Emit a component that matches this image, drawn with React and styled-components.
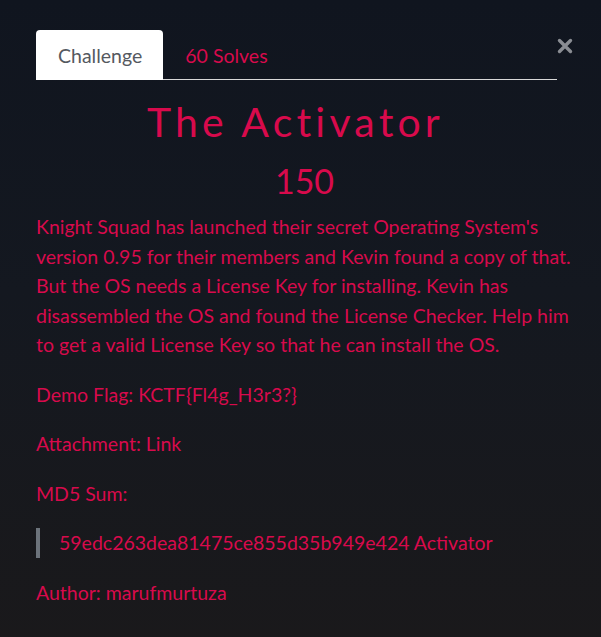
import styled, { createGlobalStyle } from 'styled-components';

const GlobalStyle = createGlobalStyle`
  html, body {
    margin: 0;
    padding: 0;
  }

  body {
    min-height: 637px;
    background: linear-gradient(180deg, #10151f 0%, #141820 45%, #1a191b 100%);
    font-family: Lato, "Open Sans", sans-serif;
  }
`;

const RED = '#d80a4c';

function App() {
  return (
    <>
      <GlobalStyle />
      <Modal>
        <TopRow>
          <Tabs>
            <Tab active>Challenge</Tab>
            <Tab>60 Solves</Tab>
          </Tabs>
          <CloseButton aria-label="close">
            <svg width="16" height="16" viewBox="0 0 16 16">
              <path d="M2.5 2.5 L13.5 13.5 M13.5 2.5 L2.5 13.5" stroke="#8a8d93" strokeWidth="3.4" strokeLinecap="round" />
            </svg>
          </CloseButton>
        </TopRow>

        <Title>The Activator</Title>
        <Points>150</Points>

        <Body>
          <Text>
            Knight Squad has launched their secret Operating System&apos;s version 0.95 for their
            members and Kevin found a copy of that. But the OS needs a License Key for installing.
            Kevin has disassembled the OS and found the License Checker. Help him to get a valid
            License Key so that he can install the OS.
          </Text>
          <Text>Demo Flag: KCTF{'{'}Fl4g_H3r3?{'}'}</Text>
          <Text>
            Attachment: <Link href="#link">Link</Link>
          </Text>
          <Text>MD5 Sum:</Text>
          <Quote>59edc263dea81475ce855d35b949e424 Activator</Quote>
          <Text>Author: marufmurtuza</Text>
        </Body>
      </Modal>
    </>
  );
}

const Modal = styled.div`
  padding: 30px 28px 20px 36px;
  display: flex;
  flex-direction: column;
  color: ${RED};
`;

const TopRow = styled.div`
  display: flex;
  align-items: flex-start;
`;

const Tabs = styled.nav`
  flex: 1;
  display: flex;
  border-bottom: 1px solid #d9d9d9;
`;

const Tab = styled.div`
  height: 50px;
  padding: 0 21px 0 22px;
  display: flex;
  align-items: center;
  font-size: 19.5px;
  border-radius: 4px 4px 0 0;
  margin-bottom: -1px;
  background: ${({ active }) => (active ? '#ffffff' : 'transparent')};
  color: ${({ active }) => (active ? '#55595f' : RED)};
`;

const CloseButton = styled.button`
  width: 16px;
  height: 16px;
  margin-top: 8px;
  padding: 0;
  border: none;
  background: none;
  display: flex;
`;

const Title = styled.h1`
  margin: 17px 0 0;
  padding-right: 18px;
  text-align: center;
  font-size: 41px;
  font-weight: 400;
  letter-spacing: 4.2px;
  line-height: 50px;
`;

const Points = styled.h2`
  margin: 14px 0 0;
  text-align: center;
  font-size: 34px;
  font-weight: 400;
  line-height: 40px;
`;

const Body = styled.div`
  display: flex;
  flex-direction: column;
  margin-top: 11px;
`;

const Text = styled.p`
  margin: 0 0 20px;
  font-size: 19.5px;
  line-height: 29.5px;
`;

const Link = styled.a`
  color: inherit;
  text-decoration: none;
`;

const Quote = styled.blockquote`
  margin: 0 0 20px;
  padding-left: 19px;
  border-left: 4px solid #6c737b;
  font-size: 19.5px;
  line-height: 29.5px;
`;

export default App;
